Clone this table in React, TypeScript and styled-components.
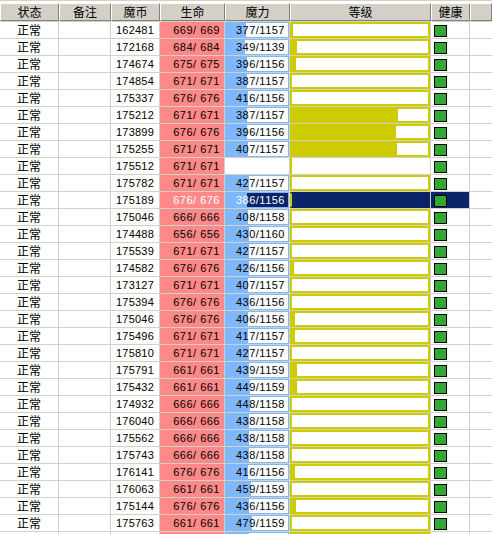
import styled, { createGlobalStyle } from 'styled-components';

const GlobalStyle = createGlobalStyle`
  html, body {
    margin: 0;
    padding: 0;
    background: #fff;
    overflow: hidden;
  }
  body {
    font-family: "Liberation Sans", Arial, sans-serif;
  }
`;

const NAVY = '#0a246a';
const PINK = '#ff8888';
const BLUE = '#80b8ff';
const YELLOW = '#cccc00';

type Row = {
  coin: string;
  hp: number;
  mp?: number;
  mpMax?: number;
  lv: number;
  empty?: boolean;
  selected?: boolean;
  blank?: boolean;
};

const rows: Row[] = [
  { coin: '162481', hp: 669, mp: 377, mpMax: 1157, lv: 1 },
  { coin: '172168', hp: 684, mp: 349, mpMax: 1139, lv: 5 },
  { coin: '174674', hp: 675, mp: 396, mpMax: 1156, lv: 4 },
  { coin: '174854', hp: 671, mp: 387, mpMax: 1157, lv: 0 },
  { coin: '175337', hp: 676, mp: 416, mpMax: 1156, lv: 0 },
  { coin: '175212', hp: 671, mp: 387, mpMax: 1157, lv: 106 },
  { coin: '173899', hp: 676, mp: 396, mpMax: 1156, lv: 104 },
  { coin: '175255', hp: 671, mp: 407, mpMax: 1157, lv: 105 },
  { coin: '175512', hp: 671, lv: 0, empty: true },
  { coin: '175782', hp: 671, mp: 427, mpMax: 1157, lv: 0 },
  { coin: '175189', hp: 676, mp: 386, mpMax: 1156, lv: 0, selected: true },
  { coin: '175046', hp: 666, mp: 408, mpMax: 1158, lv: 0 },
  { coin: '174488', hp: 656, mp: 430, mpMax: 1160, lv: 0 },
  { coin: '175539', hp: 671, mp: 427, mpMax: 1157, lv: 0 },
  { coin: '174582', hp: 676, mp: 426, mpMax: 1156, lv: 2 },
  { coin: '173127', hp: 671, mp: 407, mpMax: 1157, lv: 0 },
  { coin: '175394', hp: 676, mp: 436, mpMax: 1156, lv: 0 },
  { coin: '175046', hp: 676, mp: 406, mpMax: 1156, lv: 3 },
  { coin: '175496', hp: 671, mp: 417, mpMax: 1157, lv: 3 },
  { coin: '175810', hp: 671, mp: 427, mpMax: 1157, lv: 0 },
  { coin: '175791', hp: 661, mp: 439, mpMax: 1159, lv: 5 },
  { coin: '175432', hp: 661, mp: 449, mpMax: 1159, lv: 5 },
  { coin: '174932', hp: 666, mp: 448, mpMax: 1158, lv: 0 },
  { coin: '176040', hp: 666, mp: 438, mpMax: 1158, lv: 0 },
  { coin: '175562', hp: 666, mp: 438, mpMax: 1158, lv: 0 },
  { coin: '175743', hp: 666, mp: 438, mpMax: 1158, lv: 0 },
  { coin: '176141', hp: 676, mp: 416, mpMax: 1156, lv: 3 },
  { coin: '176063', hp: 661, mp: 459, mpMax: 1159, lv: 0 },
  { coin: '175144', hp: 676, mp: 436, mpMax: 1156, lv: 4 },
  { coin: '175763', hp: 661, mp: 479, mpMax: 1159, lv: 0 },
  // next row, only its top edge shows under the window border
  { coin: '', hp: 0, mp: 420, mpMax: 1157, lv: 0, blank: true },
];

const App = () => {
  return (
    <>
      <GlobalStyle />
      <Grid>
        <HeaderBar>
          <HeadCell>状态</HeadCell>
          <HeadCell>备注</HeadCell>
          <HeadCell>魔币</HeadCell>
          <HeadCell>生命</HeadCell>
          <HeadCell>魔力</HeadCell>
          <HeadCell>等级</HeadCell>
          <HeadCell>健康</HeadCell>
          <HeadCell />
        </HeaderBar>
        <Body>
          {rows.map((r, i) => {
            const pct = r.mp && r.mpMax ? (r.mp / r.mpMax) * 100 : 0;
            const rest = r.selected ? NAVY : '#fff';
            return (
              <RowLine key={i}>
                <StatusCell>{r.blank ? '' : '正常'}</StatusCell>
                <PlainCell />
                <CoinCell>{r.coin}</CoinCell>
                <HpCell $sel={!!r.selected}>
                  {r.blank ? '' : `${r.hp}/ ${r.hp}`}
                </HpCell>
                {r.empty ? (
                  <PlainCell />
                ) : (
                  <MpCell
                    $sel={!!r.selected}
                    style={{
                      background: `linear-gradient(to right, ${BLUE} ${pct}%, ${rest} ${pct}%)`,
                    }}
                  >
                    {r.blank ? '' : `${r.mp}/${r.mpMax}`}
                  </MpCell>
                )}
                <LevelCell>
                  {r.empty ? (
                    <LevelStub />
                  ) : (
                    <LevelBox
                      $sel={!!r.selected}
                      style={{
                        background: `linear-gradient(to right, ${YELLOW} ${r.lv}px, ${rest} ${r.lv}px)`,
                      }}
                    />
                  )}
                </LevelCell>
                <HealthCell $sel={!!r.selected}>
                  <GreenBox />
                </HealthCell>
                <PlainCell />
              </RowLine>
            );
          })}
        </Body>
      </Grid>
    </>
  );
};

export default App;

const Grid = styled.div`
  width: 492px;
  height: 534px;
  overflow: hidden;
  background: #fff;
  padding-top: 2px;
  box-sizing: border-box;
  border-top: 1px solid #d4d0c8;
`;

const HeaderBar = styled.div`
  display: grid;
  grid-template-columns: 59px 52px 49px 65px 65px 141px 39px 1fr;
  height: 18px;
  background: #d4d0c8;
`;

const HeadCell = styled.div`
  box-sizing: border-box;
  height: 18px;
  background: #d4d0c8;
  border-top: 1px solid #fff;
  border-left: 1px solid #fff;
  border-right: 1px solid #808080;
  border-bottom: 1px solid #808080;
  font-family: "Noto Sans CJK SC", sans-serif;
  font-size: 12px;
  line-height: 16px;
  color: #000;
  text-align: center;
`;

const Body = styled.div`
  display: flex;
  flex-direction: column;
  gap: 1px;
  background: #d4d0c8;
  padding-top: 1px;
`;

const RowLine = styled.div`
  display: grid;
  grid-template-columns: 58px 51px 48px 64px 64px 140px 38px 1fr;
  column-gap: 1px;
  height: 16px;
  flex-shrink: 0;
`;

const PlainCell = styled.div`
  background: #fff;
`;

const StatusCell = styled.div`
  background: #fff;
  padding-left: 17px;
  font-family: "Noto Sans CJK SC", sans-serif;
  font-size: 12px;
  line-height: 16px;
  color: #000;
`;

const CoinCell = styled.div`
  background: #fff;
  text-align: center;
  font-size: 11px;
  letter-spacing: 0.2px;
  line-height: 16px;
  color: #000;
`;

const HpCell = styled.div<{ $sel: boolean }>`
  background: ${PINK};
  text-align: right;
  padding-right: 4px;
  font-size: 11px;
  letter-spacing: 0.5px;
  line-height: 16px;
  white-space: pre;
  color: ${(p) => (p.$sel ? '#fff' : '#000')};
`;

const MpCell = styled.div<{ $sel: boolean }>`
  box-sizing: border-box;
  border: 1px solid ${BLUE};
  text-align: right;
  padding-right: 3px;
  font-size: 11px;
  letter-spacing: 0.5px;
  line-height: 14px;
  white-space: pre;
  color: ${(p) => (p.$sel ? '#fff' : '#000')};
`;

const LevelCell = styled.div`
  background: #fff;
  display: flex;
`;

const LevelBox = styled.div<{ $sel: boolean }>`
  flex: 1;
  box-sizing: border-box;
  border: 2px solid ${YELLOW};
  border-color: ${(p) =>
    p.$sel ? `${NAVY} ${NAVY} ${NAVY} ${YELLOW}` : YELLOW};
`;

const LevelStub = styled.div`
  width: 2px;
  background: ${YELLOW};
`;

const HealthCell = styled.div<{ $sel: boolean }>`
  background: ${(p) => (p.$sel ? NAVY : '#fff')};
  padding: 3px 0 0 3px;
  box-sizing: border-box;
`;

const GreenBox = styled.div`
  width: 13px;
  height: 12px;
  box-sizing: border-box;
  border: 1px solid #000;
  background: #33a633;
`;
